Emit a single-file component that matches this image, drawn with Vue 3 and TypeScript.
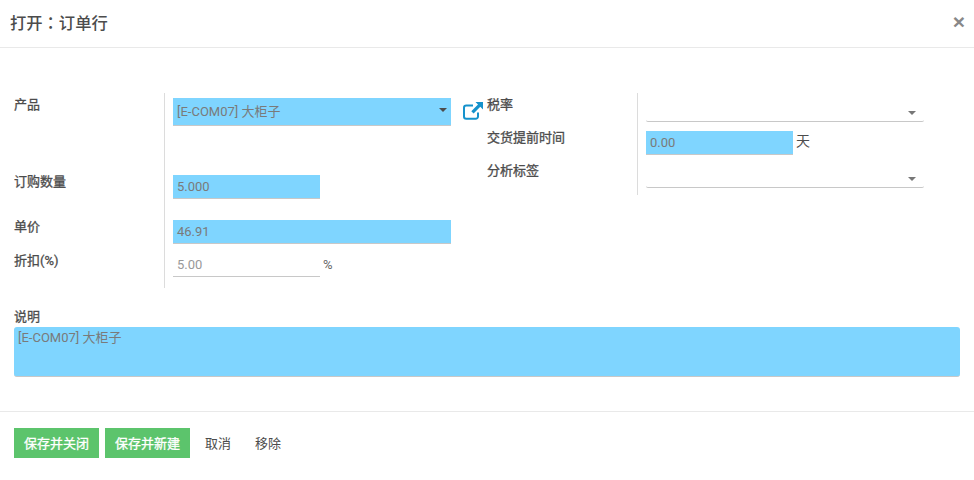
<script setup lang="ts">
const productName = "[E-COM07] 大柜子";
</script>

<template>
  <div class="modal">
    <header class="modal-header">
      <h4>打开：订单行</h4>
      <span class="close">×</span>
    </header>

    <main class="modal-body">
      <div class="groups">
        <section class="group group-left">
          <div class="row row-product">
            <label>产品</label>
            <div class="cell">
              <div class="field required select wide tall">
                {{ productName }}
                <i class="caret" />
              </div>
              <svg class="ext-link" viewBox="0 0 20 18" width="20" height="18">
                <path
                  d="M15 10.500v4a2.300 2.300 0 0 1-2.300 2.300H3.300A2.300 2.300 0 0 1 1 14.500V5.700a2.300 2.300 0 0 1 2.300-2.300H10"
                  fill="none"
                  stroke="#1592cc"
                  stroke-width="2"
                />
                <path d="M12.500 0H20v7.500l-2.700-2.700-6.700 6.700-2.300-2.300 6.700-6.700z" fill="#1592cc" />
              </svg>
            </div>
          </div>
          <div class="row row-qty">
            <label>订购数量</label>
            <div class="cell">
              <div class="field required short">5.000</div>
            </div>
          </div>
          <div class="row row-price">
            <label>单价</label>
            <div class="cell">
              <div class="field required wide">46.91</div>
            </div>
          </div>
          <div class="row row-discount">
            <label>折扣(%)</label>
            <div class="cell">
              <div class="field plain short">5.00</div>
              <span class="percent">%</span>
            </div>
          </div>
        </section>

        <section class="group group-right">
          <div class="row row-tax">
            <label>税率</label>
            <div class="cell">
              <div class="field plain select full"><i class="caret" /></div>
            </div>
          </div>
          <div class="row row-lead">
            <label>交货提前时间</label>
            <div class="cell">
              <div class="field required lead">0.00</div>
              <span class="unit">天</span>
            </div>
          </div>
          <div class="row row-tags">
            <label>分析标签</label>
            <div class="cell">
              <div class="field plain select full"><i class="caret" /></div>
            </div>
          </div>
        </section>
      </div>

      <div class="description">
        <label>说明</label>
        <div class="textarea">{{ productName }}</div>
      </div>
    </main>

    <footer class="modal-footer">
      <button class="btn primary">保存并关闭</button>
      <button class="btn primary">保存并新建</button>
      <button class="btn link">取消</button>
      <button class="btn link">移除</button>
    </footer>
  </div>
</template>

<style scoped>
.modal {
  width: 974px;
  height: 480px;
  background: #fff;
  color: #4c4c4c;
  font-family: Roboto, "Noto Sans CJK SC", sans-serif;
  font-size: 13px;
  line-height: 18px;
  overflow: hidden;
}

.modal-header {
  height: 47px;
  box-sizing: content-box;
  border-bottom: 1px solid #e9e9e9;
  display: flex;
  align-items: center;
  justify-content: space-between;
  padding: 0 10px;
}

.modal-header h4 {
  margin: 0;
  font-family: Roboto, "Noto Sans CJK TC", sans-serif;
  font-size: 16.300px;
  font-weight: 500;
  color: #4c4c4c;
}

.close {
  margin: -4px -1px 0 0;
  font-size: 21px;
  font-weight: 700;
  color: #888;
  font-family: "Liberation Sans", sans-serif;
}

.modal-body {
  padding: 45px 14px 0;
  height: 315px;
  box-sizing: border-box;
}

.groups {
  display: flex;
  align-items: flex-start;
}

.group-left {
  width: 473px;
  flex: none;
}

.row {
  display: flex;
}

.row label {
  flex: none;
  width: 151px;
  padding-top: 3px;
  -webkit-text-stroke: 0.3px #4c4c4c;
  box-sizing: border-box;
  border-right: 1px solid #dcdcdc;
}

.row-discount label {
  padding-top: 4px;
}

.cell {
  display: flex;
  padding-left: 8px;
  align-items: flex-start;
}

.row-product { height: 77px; }
.row-qty { height: 45px; }
.row-price { height: 33px; }
.row-discount { height: 40px; }
.row-tax { height: 33px; }
.row-lead { height: 33px; }
.row-tags { height: 36px; }

.field {
  position: relative;
  margin-top: 5px;
  height: 24px;
  box-sizing: border-box;
  padding: 3px 4px 0;
  color: #7a7a7a;
  border-bottom: 1px solid #c8c8c8;
}

.required {
  background: #7fd5ff;
}

.plain {
  color: #999;
}

.plain.select {
  border-radius: 2px;
}

.wide { width: 278px; }
.tall { height: 28px; padding-top: 5px; }
.short { width: 147px; }
.full { width: 278px; }
.lead { width: 147px; }

.caret {
  position: absolute;
  right: 4px;
  top: 10px;
  width: 0;
  height: 0;
  border-left: 4px solid transparent;
  border-right: 4px solid transparent;
  border-top: 4px solid #4c4c4c;
}

.plain .caret {
  right: 8px;
  top: 13px;
  border-top-color: #777;
}

.ext-link {
  margin: 9px 0 0 12px;
  flex: none;
}

.percent {
  margin: 8px 0 0 3px;
  color: #666;
}

.unit {
  margin: 6px 0 0 3px;
  font-size: 14px;
}

.description {
  margin-top: 20px;
}

.description label {
  display: block;
  -webkit-text-stroke: 0.3px #4c4c4c;
  height: 19px;
}

.textarea {
  height: 50px;
  box-sizing: border-box;
  padding: 2px 4px;
  background: #7fd5ff;
  border-bottom: 1px solid #c8c8c8;
  border-radius: 3px;
  color: #7a7a7a;
  width: 946px;
}

.modal-footer {
  border-top: 1px solid #e9e9e9;
  margin-top: 48px;
  padding: 16px 14px 0;
  display: flex;
  gap: 6px;
}

.btn {
  height: 30px;
  border: none;
  border-radius: 0;
  padding: 0 0 1px;
  font-family: inherit;
  font-size: 13px;
  background: none;
}

.primary {
  width: 85px;
  background: #5cc46c;
  color: #fff;
  -webkit-text-stroke: 0.3px #fff;
}

.link {
  color: #4c4c4c;
  margin-left: 9px;
  margin-right: 18px;
}

.link + .link {
  margin-left: 0;
}
</style>
